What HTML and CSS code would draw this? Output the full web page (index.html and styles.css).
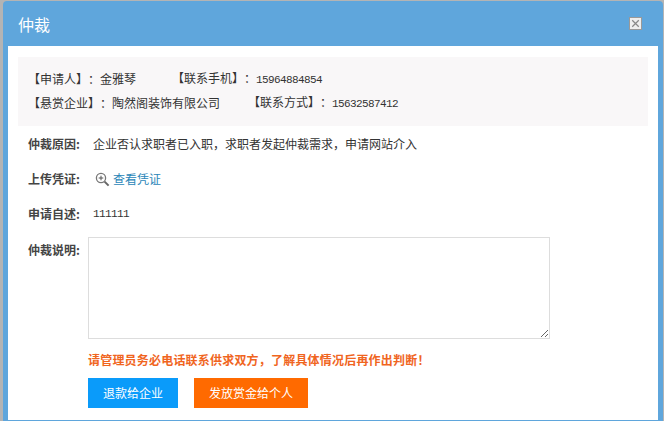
FILE: index.html
```html
<!DOCTYPE html>
<html lang="zh">
<head>
<meta charset="utf-8">
<title>仲裁</title>
<link rel="stylesheet" href="styles.css">
</head>
<body>
<div class="dialog">
  <header class="title-bar">
    <h1 class="title">仲裁</h1>
    <button class="close" aria-label="关闭">
      <svg width="11" height="11" viewBox="0 0 11 11"><path d="M1.5 1.5l8 8M9.5 1.5l-8 8" stroke="#888" stroke-width="1.5" fill="none"/></svg>
    </button>
  </header>
  <main class="content">
    <section class="info">
      <div class="info-row">
        <span class="info-a">【申请人】：金雅琴</span>
        <span>【联系手机】：<span class="num">15964884854</span></span>
      </div>
      <div class="info-row">
        <span class="info-b">【悬赏企业】：陶然阁装饰有限公司</span>
        <span>【联系方式】：<span class="num">15632587412</span></span>
      </div>
    </section>
    <div class="row row-reason">
      <span class="label">仲裁原因:</span>
      <span>企业否认求职者已入职，求职者发起仲裁需求，申请网站介入</span>
    </div>
    <div class="row row-proof">
      <span class="label">上传凭证:</span>
      <svg class="zoom-icon" width="15" height="15" viewBox="0 0 15 15">
        <circle cx="6" cy="6" r="4.6" fill="#fff" stroke="#777" stroke-width="1.3"/>
        <path d="M3.7 6h4.6M6 3.7v4.6" stroke="#555" stroke-width="1"/>
        <path d="M9.6 9.6l4 4" stroke="#666" stroke-width="2"/>
      </svg>
      <a class="link" href="#">查看凭证</a>
    </div>
    <div class="row row-self">
      <span class="label">申请自述:</span>
      <span class="num">111111</span>
    </div>
    <div class="row row-note">
      <span class="label">仲裁说明:</span>
      <textarea class="note"></textarea>
    </div>
    <p class="warn">请管理员务必电话联系供求双方，了解具体情况后再作出判断！</p>
    <div class="actions">
      <button class="btn btn-blue">退款给企业</button>
      <button class="btn btn-orange">发放赏金给个人</button>
    </div>
  </main>
</div>
</body>
</html>
```
FILE: styles.css
```css
* { box-sizing: border-box; }
html, body { margin: 0; height: 421px; overflow: hidden; }
body {
  background: #b4b4b4;
  padding: 1px 1px 0 3px;
  font: 12px/20px "Noto Sans CJK SC", "Liberation Sans", sans-serif;
  color: #333;
  text-spacing-trim: space-all;
  font-feature-settings: "chws" 0, "palt" 0;
}
.dialog {
  height: 420px;
  background: #5fa6dc;
  border-radius: 4px 4px 0 0;
  padding: 0 5px 1px;
  display: flex;
  flex-direction: column;
}
.title-bar {
  height: 45px;
  flex: none;
  display: flex;
  align-items: center;
  justify-content: space-between;
  padding: 0 16px 0 10px;
}
.title { margin: 0; font-size: 16px; font-weight: 400; color: #fff; }
.close {
  width: 13px; height: 13px; padding: 0; margin-top: -1px;
  display: flex; align-items: center; justify-content: center;
  background: #eee; border: 1px solid #999;
}
.close svg { width: 9px; height: 9px; }
.content {
  flex: 1;
  background: #fff;
  padding: 11px 10px 0;
}
.info {
  height: 69px;
  background: #f9f7f8;
  padding: 10px 10px 0 10px;
}
.info-row { display: flex; height: 24px; align-items: center; white-space: nowrap; }
.info-a { width: 144px; }
.info-b { width: 220px; }
.num { font-family: "Liberation Mono", monospace; font-size: 11px; letter-spacing: -0.6px; }
.row { display: flex; align-items: center; padding-left: 10px; white-space: nowrap; }
.label { width: 65px; font-weight: 700; flex: none; color: #444; }
.row-reason { margin-top: 8px; }
.row-proof { margin-top: 15px; }
.row-self { margin-top: 15px; }
.row-note { margin-top: 13px; align-items: flex-start; }
.row-note .label { width: 60px; margin-top: 3px; }
.zoom-icon { margin: 0 3px 0 2px; flex: none; }
.link { color: #2a86b8; text-decoration: none; }
.note {
  width: 462px; height: 102px;
  margin: 0; padding: 0;
  border: 1px solid #ddd;
  background: #fff;
  display: block;
}
.warn {
  margin: 11px 0 0 70px;
  font-weight: 700;
  letter-spacing: 0.2px;
  color: #f0651e;
  white-space: nowrap;
}
.actions { display: flex; gap: 16px; margin: 8px 0 0 70px; }
.btn {
  height: 30px;
  border: 0; padding: 0;
  color: #fff;
  font: inherit;
}
.btn-blue { width: 90px; background: #0a9bfa; }
.btn-orange { width: 114px; background: #ff6a00; }
```
